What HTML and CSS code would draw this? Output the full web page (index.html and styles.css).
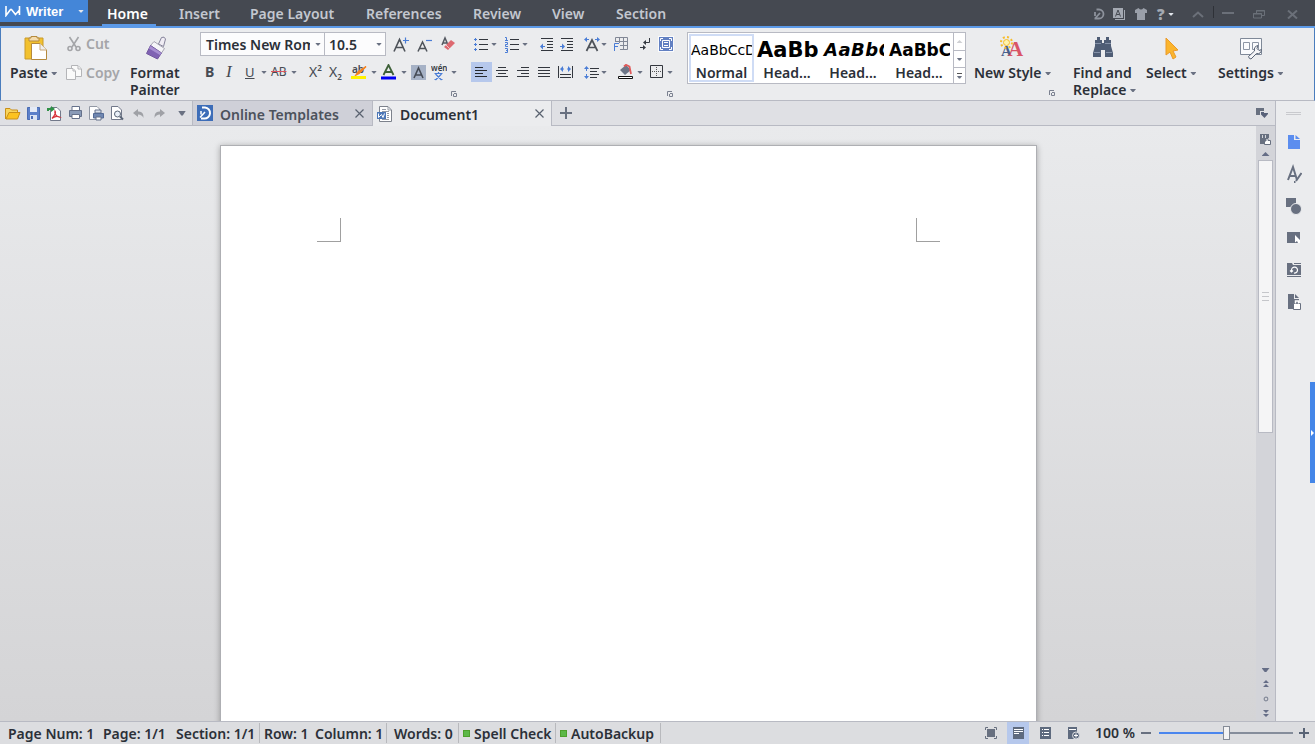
FILE: index.html
```html
<!DOCTYPE html>
<html lang="en">
	<head>
		<meta charset="UTF-8" />
		<meta name="viewport" content="width=device-width, initial-scale=1.0" />
		<title>Document1 - Writer</title>
		<link rel="stylesheet" href="styles.css">
	</head>
	<body>
		<header class="titlebar">
			<button class="app-button">
				<svg width="16" height="11" viewBox="0 0 16 11" fill="none" stroke="#fff" stroke-width="1.6"><path d="M1 0V9.500L5.500 3.500H6.500L10.500 8.500L14.500 4V0M1 3V9M14.500 1V9" /></svg>
				<span>Writer</span>
				<i class="caret light"></i>
			</button>
			<nav class="menu">
				<a class="active">Home</a>
				<a>Insert</a>
				<a>Page Layout</a>
				<a>References</a>
				<a>Review</a>
				<a>View</a>
				<a>Section</a>
			</nav>
			<div class="window-tools">
				<svg width="12" height="12" viewBox="0 0 12 12" fill="none" stroke="#8d929c" stroke-width="1.800"><path d="M3.500 1.500H6A4.500 4.500 0 0 1 6 10.500H1.500M2 10.500L7 5M2 4V8" /></svg>
				<svg width="12" height="12" viewBox="0 0 12 12"><path d="M0 0H10V10H0ZM11 2H12V12H2V11H11Z" fill="#a4a9b2" /><path d="M2.500 8.500L5 2L7.500 8.500M3.500 6.500H6.500" fill="none" stroke="#454951" /></svg>
				<svg width="12" height="12" viewBox="0 0 12 12"><path d="M0 2L3.500 0Q6 3 8.500 0L12 2V5H10V12H2V5H0Z" fill="#9a9fa9" /></svg>
				<b class="help">?</b>
				<i class="caret light"></i>
				<svg width="12" height="7" viewBox="0 0 12 7"><path d="M1 6L6 1.500L11 6" fill="none" stroke="#6b7079" stroke-width="2" /></svg>
				<i class="tool-line"></i>
				<svg width="12" height="12" viewBox="0 0 12 12"><path d="M0 5H12" stroke="#6b7079" stroke-width="2" /></svg>
				<svg width="12" height="9" viewBox="0 0 12 9" fill="none" stroke="#6b7079"><path d="M3.500 3V.5H11.500V5.500H9M3 1H12" /><path d="M.5 3.500H8.500V8H.5ZM0 4H9" /></svg>
				<svg width="11" height="9" viewBox="0 0 11 9"><path d="M1 .5L10 8.500M10 .5L1 8.500" stroke="#6b7079" stroke-width="2" /></svg>
			</div>
		</header>

		<section class="ribbon">
			<!-- Clipboard -->
			<div class="group paste">
				<svg width="24" height="25" viewBox="0 0 24 25"><path d="M1 2H19V23H1Z" fill="#f2c12e" stroke="#c99a2a" /><path d="M5 5V2H7V.5H13V2H15V5Z" fill="#f4dcae" stroke="#b58a3e" /><path d="M7.500 7.500H16L22.500 14V23.500H7.500Z" fill="#fff" stroke="#b58a3e" /><path d="M16 7.500V14H22.500" fill="#eee" stroke="#c9a876" /></svg>
				<span>Paste <i class="caret"></i></span>
			</div>
			<div class="group clip">
				<div class="clip-row">
					<svg width="14" height="16" viewBox="0 0 14 16" fill="none" stroke="#a4a5a8" stroke-width="1.600"><path d="M2.500 1L9 11M11.500 1L5 11" /><circle cx="3" cy="12.500" r="2" /><circle cx="11" cy="12.500" r="2" /></svg>
					<span>Cut</span>
				</div>
				<div class="clip-row">
					<svg width="16" height="16" viewBox="0 0 16 16" fill="#fafafa" stroke="#b4b5b8"><path d="M5.500 .5H12L15.500 4V11.500H5.500Z" /><path d="M.5 3.500H7L9.500 6V14.500H.5Z" /><path d="M12 1V4H15M7 4V6H9" /></svg>
					<span>Copy</span>
				</div>
			</div>
			<div class="group painter">
				<svg width="21" height="24" viewBox="0 0 21 24"><path d="M12.500 8L15.500 1.500Q18.500 0 19.500 3L17.500 10.500Z" fill="#f0edf4" stroke="#85839a" /><path d="M8 5.500L18.500 12.500L15.500 17L4.500 9.500Z" fill="#f5f5f8" stroke="#a6a4b2" /><path d="M4.500 9.500L15.500 17L11.500 23L.5 17.500Z" fill="#7f62b3" stroke="#73589f" /><path d="M4.500 10L15.500 17L14 19L3 12.500Z" fill="#a78fd2" /></svg>
				<span>Format<br>Painter</span>
			</div>

			<!-- Font -->
			<div class="group font-group">
				<div class="font-row-1">
					<div class="combo">
						<span class="combo-name">Times New Roman</span><i class="caret"></i>
						<span class="combo-size">10.5</span><i class="caret"></i>
					</div>
					<svg width="17" height="17" viewBox="0 0 17 17" fill="none"><path d="M1 15.500L6.500 3.500L12 15.500M3 11.500H10" stroke="#4d5259" stroke-width="1.600" /><path d="M10 4.500H16M12.500 1.500V7.500" stroke="#4a7dd6" stroke-width="1.200" /></svg>
					<svg width="16" height="17" viewBox="0 0 16 17" fill="none"><path d="M1 15.500L5.500 6L10 15.500M2.500 12.500H8.500" stroke="#4d5259" stroke-width="1.500" /><path d="M9 4.500H15" stroke="#4a7dd6" stroke-width="1.200" /></svg>
					<svg width="15" height="16" viewBox="0 0 15 16"><path d="M1 9L4 2L7 9M2 7H6" fill="none" stroke="#555a62" stroke-width="1.500" /><path d="M3 11L10 4L14 7L7 14Z" fill="#dd6970" /><path d="M5 9L9 13" stroke="#f3c5c8" /></svg>
				</div>
				<div class="font-row-2">
					<b class="ltr">B</b>
					<em class="ltr serif">I</em>
					<u class="ltr under">U</u>
					<i class="caret"></i>
					<s class="ltr strike">AB</s>
					<i class="caret"></i>
					<span class="ltr script">X<sup>2</sup></span>
					<span class="ltr script">X<sub>2</sub></span>
					<svg width="17" height="16" viewBox="0 0 17 16"><text x="1" y="9" class="tiny">ab</text><path d="M15 2.500L8 9.500L5 11L7 8Z" fill="#f58220" stroke="#f58220" stroke-width="1.500" /><path d="M0 12H15V15H0Z" fill="#fff200" /></svg>
					<i class="caret"></i>
					<svg width="16" height="16" viewBox="0 0 16 16"><path d="M2.500 11L7.500 1L12.500 11M4.500 8H10.500" fill="none" stroke="#3d6038" stroke-width="1.800" /><path d="M0 12.500H15V15.500H0Z" fill="#0000f5" /></svg>
					<i class="caret"></i>
					<svg width="15" height="15" viewBox="0 0 15 15"><path d="M0 0H15V15H0Z" fill="#a6b2c6" /><path d="M3 13L7.500 3L12 13M4.500 10H10.500" fill="none" stroke="#454b55" stroke-width="1.600" /></svg>
					<svg width="16" height="17" viewBox="0 0 16 17"><text x="0" y="7" class="wen">wén</text><path d="M3.500 9.500H11.500M7.500 8V10M4.500 10L10.500 16M10.500 10L4.500 16M3.500 15.500H5.500M9.500 15.500H11.500" fill="none" stroke="#4a7dd6" stroke-width="1.200" /></svg>
					<i class="caret"></i>
				</div>
				<svg class="launcher" width="6" height="6" viewBox="0 0 6 6"><path d="M.5 5V.5H5M2.500 3V5.500H5.500V2.500H3" fill="none" stroke="#7b8190" /></svg>
			</div>

			<!-- Paragraph -->
			<div class="group para-group">
				<div class="para-row-1">
					<svg width="15" height="15" viewBox="0 0 15 15"><path d="M5 2.500H14M5 7.500H14M5 12.500H14" stroke="#33373e" /><path d="M0 2.500H3M1.500 1V4M0 7.500H3M1.500 6V9M0 12.500H3M1.500 11V14" stroke="#4a7dd6" /></svg>
					<i class="caret"></i>
					<svg width="15" height="17" viewBox="0 0 15 17" fill="none"><path d="M5 3.500H14M5 8.500H14M5 13.500H14" stroke="#33373e" /><path d="M0 1.500H1.500V4.500M0 4.500H3M0 6.500H2.500V8.500H.5V10.500H3M0 12.500H2.500V16.500H0M1 14.500H2.500" stroke="#4a7dd6" /></svg>
					<i class="caret"></i>
					<svg width="14" height="13" viewBox="0 0 14 13"><path d="M1 .5H13M7 3.500H13M7 6.500H13M7 9.500H13M1 12.500H13" stroke="#33373e" /><path d="M1 8.500H5" stroke="#4a7dd6" /><path d="M0 8.500L3 5.500V11.500Z" fill="#4a7dd6" /></svg>
					<svg width="14" height="13" viewBox="0 0 14 13"><path d="M1 .5H13M7 3.500H13M7 6.500H13M7 9.500H13M1 12.500H13" stroke="#33373e" /><path d="M0 8.500H4" stroke="#4a7dd6" /><path d="M5 8.500L2 5.500V11.500Z" fill="#4a7dd6" /></svg>
					<svg width="16" height="15" viewBox="0 0 16 15"><path d="M2.500 14L8 3L13.500 14M5 10.500H11" fill="none" stroke="#4d5259" stroke-width="1.700" /><path d="M0 2.500L3 0V5ZM16 2.500L13 0V5Z" fill="#4a7dd6" /><path d="M2 2.500H5M11 2.500H14" stroke="#4a7dd6" /></svg>
					<i class="caret"></i>
					<svg width="15" height="15" viewBox="0 0 15 15"><path d="M1.500 5V.5H13.500V12.500H6M5.500 .5V6M9.500 .5V12M2 4.500H13M6 8.500H13" fill="none" stroke="#818795" /><path d="M.5 14V6.500H5M.5 9.500H4" fill="none" stroke="#4a7dd6" /></svg>
					<svg width="12" height="13" viewBox="0 0 12 13" fill="none"><path d="M9.500 0V4.500H5M0 9.500H5" stroke="#343941" /><path d="M3 4.500L6 2V7ZM6 9.500L3 7V12Z" fill="#343941" /></svg>
					<svg width="16" height="16" viewBox="0 0 16 16"><path d="M0 0H16V16H0Z" fill="#fafbfd" /><path d="M1 1H15V15H1Z" fill="#6280c2" /><path d="M4.500 4.500H11.500V11.500H4.500ZM6 6.500H10M6 9.500H10M2.500 5V2.500H5M11 2.500H13.500V5M2.500 11V13.500H5M11 13.500H13.500V11" fill="none" stroke="#fff" /></svg>
				</div>
				<div class="para-row-2">
					<span class="pressed"><svg width="13" height="11" viewBox="0 0 13 11"><path d="M0 .5H8M0 3.500H12M0 6.500H8M0 9.500H12" stroke="#25282d" /></svg></span>
					<svg width="13" height="11" viewBox="0 0 13 11"><path d="M2 .5H10M0 3.500H12M2 6.500H10M0 9.500H12" stroke="#33373e" /></svg>
					<svg width="13" height="11" viewBox="0 0 13 11"><path d="M4 .5H12M0 3.500H12M4 6.500H12M0 9.500H12" stroke="#33373e" /></svg>
					<svg width="13" height="11" viewBox="0 0 13 11"><path d="M0 .5H12M0 3.500H12M0 6.500H12M0 9.500H12" stroke="#33373e" /></svg>
					<svg width="15" height="12" viewBox="0 0 15 12"><path d="M.5 0V12M14.500 0V12M2 8.500H13M2 11.500H13" stroke="#33373e" /><path d="M2 3L5 0V6ZM13 3L10 0V6Z" fill="#4a7dd6" /><path d="M4 3H6M9 3H11" stroke="#4a7dd6" /></svg>
					<svg width="16" height="13" viewBox="0 0 16 13"><path d="M6 2.500H15M6 5.500H13M6 8.500H15M6 11.500H13" stroke="#33373e" /><path d="M2.500 0L5 3H0ZM2.500 13L5 10H0Z" fill="#4a7dd6" /><path d="M2.500 2V5M2.500 8V11" stroke="#4a7dd6" /></svg>
					<i class="caret"></i>
					<svg width="16" height="16" viewBox="0 0 16 16"><path d="M2 6L8 1L13 6L7 11Z" fill="#6d7687" /><path d="M6 2.500L8 .8L11.500 2.500L13 10" fill="none" stroke="#e05a5a" stroke-width="1.800" /><path d="M.5 12.500H14.500V14.500H.5Z" fill="#fff" stroke="#111" /></svg>
					<i class="caret"></i>
					<svg width="14" height="14" viewBox="0 0 14 14" fill="none"><path d="M.5 .5H12.500V12.500H.5Z" stroke="#33373e" /><path d="M2 6.500H12M6.500 2V12" stroke="#555" stroke-dasharray="1 1" /></svg>
					<i class="caret"></i>
				</div>
				<svg class="launcher" width="6" height="6" viewBox="0 0 6 6"><path d="M.5 5V.5H5M2.500 3V5.500H5.500V2.500H3" fill="none" stroke="#7b8190" /></svg>
			</div>

			<!-- Styles -->
			<div class="gallery">
				<div class="style selected"><p>AaBbCcDd</p><span>Normal</span></div>
				<div class="style h1"><p>AaBb</p><span>Head...</span></div>
				<div class="style h2"><p>AaBbC</p><span>Head...</span></div>
				<div class="style h3"><p>AaBbC</p><span>Head...</span></div>
				<div class="gallery-nav">
					<span><i class="caret up"></i></span>
					<span><i class="caret"></i></span>
					<span class="more"><i class="caret"></i></span>
				</div>
			</div>
			<div class="group new-style">
				<svg width="24" height="24" viewBox="0 0 24 24"><text x="1" y="20" class="glyph-a blue">A</text><text x="8" y="20" class="glyph-a red">A</text><circle cx="6.500" cy="6.500" r="3" fill="#fff3ad" stroke="#f7bd2c" /><circle cx="6.500" cy="6.500" r="5.500" fill="none" stroke="#f7bd2c" stroke-width="2" stroke-dasharray="2 2.300" /></svg>
				<span>New Style <i class="caret"></i></span>
				<svg class="launcher" width="6" height="6" viewBox="0 0 6 6"><path d="M.5 5V.5H5M2.500 3V5.500H5.500V2.500H3" fill="none" stroke="#7b8190" /></svg>
			</div>
			<div class="group find">
				<svg width="22" height="21" viewBox="0 0 22 21"><path d="M5 0H8V3H10V6H12V3H14V0H17V3H19V9L21 16V20H13V13H9V20H1V16L3 9V3H5Z" fill="#4f5d75" /><path d="M3 6.500H9M13 6.500H19M2 15.500H8M14 15.500H20" stroke="#8491a8" /></svg>
				<span>Find and<br>Replace <i class="caret"></i></span>
			</div>
			<div class="group select">
				<svg width="16" height="23" viewBox="0 0 16 23"><path d="M2 1L14 13L9 14L12 20L9 22L6 15L2 18Z" fill="#fbb52d" stroke="#ea9a2a" /></svg>
				<span>Select <i class="caret"></i></span>
			</div>
			<div class="group settings">
				<svg width="24" height="23" viewBox="0 0 24 23" fill="none"><path d="M1.500 1.500H22.500V17.500H1.500Z" fill="#fafbfd" stroke="#7f8998" /><path d="M4.500 5.500H10.500V12.500H4.500ZM13.500 5.500H19.500V12.500H13.500Z" stroke="#8d96a5" /><path d="M9.500 19.500L15.500 14Q14.500 9.500 19 8.500L18 11.500L20 13.500L22.500 12.500Q22 17.500 17.500 16.500L12 22Q10 22 9.500 19.500Z" fill="#f5f5f7" stroke="#596476" /></svg>
				<span>Settings <i class="caret"></i></span>
			</div>
		</section>

		<div class="workspace">
			<div class="left">
				<div class="tabstrip">
					<div class="quick">
						<svg width="16" height="13" viewBox="0 0 16 13"><path d="M.5 12V1.500H5L6.500 3H12.500V5" fill="#f8d45c" stroke="#c98f18" /><path d="M1 12L4 5.500H15L12.500 12Z" fill="#fcc21f" stroke="#c98f18" /></svg>
						<svg width="14" height="13" viewBox="0 0 14 13"><path d="M.5 .5H12.500V12.500H.5Z" fill="#5b7fc9" stroke="#4a6cb4" /><path d="M3 0H10V5H3Z" fill="#e4eaf6" /><path d="M3 8H10V13H3Z" fill="#dbe3f2" /><path d="M4 9H6V12H4Z" fill="#4a6cb4" /></svg>
						<svg width="15" height="15" viewBox="0 0 15 15"><path d="M3.500 1.500H10L13.500 5V14.500H3.500Z" fill="#fff" stroke="#72798a" /><path d="M5 12.500C8 9 9 6 8 5C7 8 10 11 12.500 11C9 9 7 11 5 12.500Z" fill="none" stroke="#d8343c" stroke-width="1.300" /><path d="M0 2H4V0L8 3L4 6V4H2V5H0Z" fill="#2f9147" /></svg>
						<svg width="14" height="14" viewBox="0 0 14 14"><path d="M3 .5H10.500V5H3Z" fill="#fff" stroke="#65718a" /><path d="M.5 4.500H12.500V10.500H.5Z" fill="#8a9bb8" stroke="#65718a" /><path d="M3 8.500H10.500V12.500H3Z" fill="#fff" stroke="#65718a" /></svg>
						<svg width="16" height="15" viewBox="0 0 16 15"><path d="M.5 .5H8L10.500 3V13.500H.5Z" fill="#fff" stroke="#9298a4" /><path d="M6 4H12V7H6Z" fill="#dce3ee" stroke="#65718a" /><path d="M4.500 7.500H14.500V12H4.500Z" fill="#7087b1" stroke="#546b96" /><path d="M7 11H12V14H7Z" fill="#fff" stroke="#65718a" /></svg>
						<svg width="13" height="15" viewBox="0 0 13 15"><path d="M.5 .5H7L10.500 4V13.500H.5Z" fill="#fff" stroke="#72798a" /><circle cx="6.500" cy="8" r="3" fill="#eaf0f8" stroke="#596476" /><path d="M9 10.500L12 13.500" stroke="#596476" stroke-width="2" /></svg>
						<svg width="12" height="9" viewBox="0 0 12 9"><path d="M0 4L5 0V2.500Q11 2 10.500 9Q9 5.500 5 5.500V8Z" fill="#9fa1a6" /></svg>
						<svg width="12" height="9" viewBox="0 0 12 9"><path d="M11 4L6 0V2.500Q0 2 .5 9Q2 5.500 6 5.500V8Z" fill="#9fa1a6" /></svg>
						<i class="caret big"></i>
					</div>
					<div class="tab">
						<svg width="16" height="16" viewBox="0 0 16 16"><path d="M0 0H16V16H0Z" fill="#3d6db8" /><path d="M5 2.500H8A5.500 5.500 0 0 1 7 13.500H4" fill="none" stroke="#fff" stroke-width="2" /><path d="M3 12.500L8 7M4 6V9.500" stroke="#fff" stroke-width="1.500" /></svg>
						<span>Online Templates</span>
						<svg width="9" height="9" viewBox="0 0 9 9"><path d="M.5 .5L8.500 8.500M8.500 .5L.5 8.500" stroke="#59616f" stroke-width="1.200" /></svg>
					</div>
					<div class="tab current">
						<svg width="16" height="16" viewBox="0 0 16 16"><path d="M2.500 .5H11L14.500 4V15.500H2.500Z" fill="#fff" stroke="#7d828c" /><path d="M5 3.500H9M5 5.500H12M10 7.500H12M10 9.500H12M10 11.500H12M5 13.500H12M11 1V4H14" stroke="#969ba5" fill="none" /><path d="M0 6H9V13H0Z" fill="#4e78b8" /><path d="M1.500 7.500V11.500L4.500 8.500L6 11.500L7.500 7.500" stroke="#fff" fill="none" /></svg>
						<span>Document1</span>
						<svg width="9" height="9" viewBox="0 0 9 9"><path d="M.5 .5L8.500 8.500M8.500 .5L.5 8.500" stroke="#59616f" stroke-width="1.200" /></svg>
					</div>
					<svg class="add" width="12" height="12" viewBox="0 0 12 12"><path d="M6 0V12M0 6H12" stroke="#687080" stroke-width="2" /></svg>
					<svg class="tab-list" width="13" height="11" viewBox="0 0 13 11"><path d="M0 0H8V3H4V7H0Z" fill="#687080" /><path d="M5 4H8V5H12V6L8.500 10L5 6.500Z" fill="#59627a" /></svg>
				</div>
				<div class="doc-row">
					<main class="canvas">
						<div class="page">
							<i class="crop"></i>
							<i class="crop right"></i>
						</div>
					</main>
					<div class="scrollbar">
						<svg width="11" height="11" viewBox="0 0 11 11"><path d="M0 0H9V4H6V10H0Z" fill="#687080" /><path d="M2.500 1V4M5.500 1V4" stroke="#d3d4d9" /><path d="M4.500 10.500V7H6V4.500H8V6.500H10.500V10.500Z" fill="#fff" stroke="#687080" /></svg>
						<i class="caret up blue"></i>
						<div class="thumb"><i></i><i></i><i></i></div>
						<div class="scroll-end">
							<i class="caret down blue"></i>
							<svg width="6" height="8" viewBox="0 0 6 8"><path d="M3 0L6 3H0ZM3 4L6 7H0Z" fill="#656d86" /></svg>
							<svg width="6" height="6" viewBox="0 0 6 6"><circle cx="3" cy="3" r="1.800" fill="none" stroke="#858b9a" stroke-width="1.200" /></svg>
							<svg width="6" height="8" viewBox="0 0 6 8"><path d="M3 3L6 0H0ZM3 7L6 4H0Z" fill="#656d86" /></svg>
						</div>
					</div>
				</div>
			</div>
			<aside class="sidebar">
				<i class="grip"></i>
				<svg width="16" height="32" viewBox="0 -9 16 32"><path d="M2 0H8V5H14V14H2Z" fill="#5b8def" /><path d="M9.500 0L14 4H9.500Z" fill="#5b8def" /></svg>
				<svg width="16" height="32" viewBox="0 -9 16 32"><path d="M2 13L7 0L11 13M3.500 9H10" fill="none" stroke="#687080" stroke-width="2" /><path d="M15.500 6L10 14M8 15H9.500" stroke="#687080" stroke-width="2" /></svg>
				<svg width="16" height="32" viewBox="0 -8 16 32"><path d="M0 0H10V9H0Z" fill="#687080" /><circle cx="10" cy="11" r="5.500" fill="#687080" stroke="#ebecee" /></svg>
				<svg width="16" height="32" viewBox="0 -8 16 32"><path d="M1 2H14V13H1Z" fill="#687080" /><path d="M9 5V12.500L11 11L12 13H14V10Z" fill="#fff" /></svg>
				<svg width="16" height="32" viewBox="0 -8 16 32"><path d="M1 1H6L7 3H15V13H1ZM1 14H15V15H1ZM8 1H15V2H8Z" fill="#687080" /><path d="M5.500 10V8A3 3 0 1 1 8 11M4 8.500L5.500 10L7 8.500" fill="none" stroke="#fff" stroke-width="1.200" /></svg>
				<svg width="16" height="32" viewBox="0 -8 16 32"><path d="M2 0H8V5H13V15H2ZM9 0L13 4H9Z" fill="#687080" /><path d="M7.500 9.500H14.500V15.500H7.500Z" fill="#fff" stroke="#687080" /><path d="M9.500 9.500V7H12.500V9.500" fill="none" stroke="#fff" stroke-width="1.500" /></svg>
				<div class="drawer"></div>
			</aside>
		</div>

		<footer class="status">
			<div class="counts">
				<span>Page Num: 1</span>
				<span>Page: 1/1</span>
				<span>Section: 1/1</span>
				<span class="sep">Row: 1</span>
				<span>Column: 1</span>
				<span class="sep words">Words: 0</span>
				<span class="sep"><i class="led"></i>Spell Check</span>
				<span class="sep"><i class="led"></i>AutoBackup</span>
				<span class="sep"></span>
			</div>
			<div class="views">
				<svg width="13" height="13" viewBox="0 0 13 13"><path d="M2 2H10V10H2Z" fill="#687080" /><path d="M.5 3V.5H3M9 .5H11.500V3M.5 9V11.500H3M9 11.500H11.500V9" fill="none" stroke="#687080" /></svg>
				<span class="pressed"><svg width="11" height="12" viewBox="0 0 11 12"><path d="M0 0H11V12H0Z" fill="#5e6a7e" /><path d="M1 2.500H10M1 4.500H10M1 6.500H6" stroke="#fff" /></svg></span>
				<svg width="11" height="12" viewBox="0 0 11 12"><path d="M0 0H11V12H0Z" fill="#5e6a7e" /><path d="M2 2.500H3M4 2.500H9M2 5.500H3M4 5.500H9M2 8.500H3M4 8.500H9" stroke="#fff" /></svg>
				<svg width="12" height="12" viewBox="0 0 12 12"><path d="M0 0H9V12H0Z" fill="#5e6a7e" /><path d="M1 2.500H8" stroke="#fff" /><circle cx="8" cy="8.500" r="3.500" fill="#5e6a7e" stroke="#dcdde0" /><path d="M6 8.500H10M8 6.500V10.500" stroke="#fff" /></svg>
			</div>
			<span class="zoom-value">100 %</span>
			<svg width="10" height="2" viewBox="0 0 10 2"><path d="M0 0H10V2H0Z" fill="#687080" /></svg>
			<div class="slider"><i class="done"></i><i class="knob"></i><i class="rest"></i></div>
			<svg width="10" height="10" viewBox="0 0 10 10"><path d="M0 5H10M5 0V10" stroke="#596476" stroke-width="2" /></svg>
		</footer>
	</body>
</html>
```
FILE: styles.css
```css
* {
	box-sizing: border-box;
}

body {
	margin: 0;
	height: 744px;
	overflow: hidden;
	display: flex;
	flex-direction: column;
	font-family: "Noto Sans", "Open Sans", sans-serif;
	font-size: 14px;
	font-weight: 600;
	line-height: 17px;
	color: #2b3038;
	background: #ebecee;
}

svg {
	display: block;
	flex: none;
}

span {
	white-space: nowrap;
}

.caret {
	display: inline-block;
	flex: none;
	width: 6px;
	height: 3px;
	background: #6a7182;
	clip-path: polygon(0 0, 100% 0, 60% 100%, 40% 100%);
	vertical-align: 3px;
}

.caret.up {
	clip-path: polygon(50% 0, 100% 100%, 0 100%);
	background: #d0d1d4;
}

.caret.light {
	background: #e2e6ec;
}

.caret.big {
	width: 8px;
	height: 5px;
}

.caret.blue {
	width: 8px;
	height: 4px;
	background: #656d86;
}

/* title bar */
.titlebar {
	height: 28px;
	flex: none;
	display: flex;
	background: #454951;
	border-bottom: 2px solid #5c9ae8;
}

.app-button {
	width: 88px;
	height: 22px;
	padding: 0 4px 0 5px;
	display: flex;
	align-items: center;
	border: 0;
	background: #4486d8;
	color: #fff;
	font: bold 13px "Liberation Sans", sans-serif;
}

.app-button span {
	margin-left: 5px;
	flex: 1;
	text-align: left;
}

.menu {
	margin-left: 14px;
	display: grid;
	grid-template-columns: 72px 71px 116px 107px 79px 64px 70px;
	color: #c3c7cf;
}

.menu a {
	height: 26px;
	padding: 5px 0 0 5px;
	white-space: nowrap;
}

.menu .active {
	width: 54px;
	color: #fff;
	border-bottom: 2px solid #5c9ae8;
}

.window-tools {
	margin-left: auto;
	height: 26px;
	display: grid;
	grid-template-columns: 20px 22px 22px 11px 24px 21px 9px 31px 34px 28px;
	align-items: center;
	padding-top: 2px;
}

.window-tools .help {
	color: #a4a9b2;
	font-size: 15px;
}

.tool-line {
	width: 1px;
	height: 12px;
	margin-top: -4px;
	background: #2e3137;
}

/* ribbon */
.ribbon {
	height: 73px;
	flex: none;
	display: flex;
	background: #ebecee;
	border: solid #4a7dbd;
	border-width: 0 1px;
	border-bottom: 1px solid #b8bac3;
}

.group {
	flex: none;
	display: flex;
	flex-direction: column;
}

.paste {
	width: 57px;
	padding: 8px 0 0 9px;
}

.paste svg {
	margin: 0 0 3px 14px;
}

.clip {
	width: 72px;
	padding: 7px 0 0 9px;
	gap: 11px;
	color: #a4a5a8;
}

.clip-row {
	display: grid;
	grid-template-columns: 19px 40px;
	height: 18px;
	align-items: center;
}

.clip-row span {
	margin-top: -1px;
}

.clip-row + .clip-row svg {
	margin-left: -1px;
}

.painter {
	width: 70px;
}

.painter svg {
	margin: 8px 0 4px 16px;
}

.font-group {
	width: 271px;
	padding-top: 4px;
}

.font-row-1 {
	height: 24px;
	display: grid;
	grid-template-columns: 193px 24px 24px 20px;
	align-items: center;
}

.combo {
	width: 186px;
	height: 24px;
	border: 1px solid #b8bac3;
	background: #fcfcfd;
	display: grid;
	grid-template-columns: 114px 9px 52px 8px;
	align-items: center;
}

.combo-name {
	padding-left: 5px;
	width: 109px;
	overflow: hidden;
}

.combo-size {
	border-left: 1px solid #b8bac3;
	height: 22px;
	line-height: 23px;
	padding-left: 4px;
}

.font-row-2 {
	height: 32px;
	padding-left: 5px;
	display: grid;
	grid-template-columns: 21px 19px 16px 10px 20px 16px 20px 24px 20px 10px 20px 10px 20px 20px 8px;
	align-items: center;
}

.ltr {
	font: 14px/16px "Noto Sans", sans-serif;
	color: #464b53;
}

b.ltr {
	font-weight: bold;
}

.ltr.serif {
	font-family: "Liberation Serif", serif;
	font-size: 17px;
	font-style: italic;
}

.ltr.under {
	font-size: 13px;
}

.ltr.strike {
	font-size: 12px;
	text-decoration: line-through #dd5560;
}

.ltr.script {
	margin-left: 2px;
}

.ltr sup,
.ltr sub {
	font-size: 8px;
	font-weight: 600;
	line-height: 0;
}

.ltr sup {
	vertical-align: 6px;
}

.ltr sub {
	vertical-align: -3px;
}

.tiny {
	font: 600 10px "Noto Sans", sans-serif;
	fill: #464b53;
}

.wen {
	font: 600 8px "Noto Sans", sans-serif;
	fill: #343941;
}

.launcher {
	margin: 3px 0 0 251px;
}

.para-group {
	width: 216px;
	padding-top: 4px;
}

.para-row-1 {
	height: 24px;
	padding-left: 3px;
	display: grid;
	grid-template-columns: 17px 14px 17px 18px 20px 24px 17px 13px 26px 18px 17px;
	align-items: center;
}

.para-row-2 {
	height: 32px;
	display: grid;
	grid-template-columns: 25px 21px 21px 20px 26px 17px 17px 19px 13px 17px 8px;
	align-items: center;
}

.pressed {
	background: #b6c8ec;
}

.para-row-2 .pressed {
	width: 21px;
	height: 20px;
	padding: 5px 4px;
}

.para-group .launcher {
	margin-left: 196px;
}

.gallery {
	width: 279px;
	height: 52px;
	margin-top: 4px;
	flex: none;
	display: flex;
	border: 1px solid #b8bac3;
	background: #fff;
}

.style {
	width: 66px;
	height: 48px;
	margin-top: 1px;
	padding: 2px;
	text-align: center;
	overflow: hidden;
}

.style.selected {
	width: 65px;
	margin-left: 1px;
	border: 2px solid #cfdcf5;
	padding: 0;
}

.style p {
	margin: 0;
	height: 28px;
	line-height: 28px;
	text-align: left;
	overflow: hidden;
	white-space: nowrap;
	color: #000;
	font-family: "DejaVu Sans", sans-serif;
	font-size: 14px;
	font-weight: normal;
}

.style.h1 p,
.style.h2 p,
.style.h3 p {
	padding-left: 1px;
	font-weight: bold;
	font-size: 17px;
}

.style.h1 p {
	font-size: 21px;
}

.style.h2 p {
	padding-left: 2px;
	font-size: 18px;
	font-style: italic;
	letter-spacing: 0.5px;
}

.gallery-nav {
	width: 12px;
	margin-left: auto;
	display: grid;
	grid-template-rows: 17px 17px 16px;
	border-left: 1px solid #b8bac3;
}

.gallery-nav span {
	display: flex;
	flex-direction: column;
	align-items: center;
	justify-content: center;
}

.gallery-nav span + span {
	border-top: 1px solid #b8bac3;
}

.gallery-nav .more::before {
	content: "";
	width: 5px;
	height: 1px;
	margin-bottom: 2px;
	background: #555;
}

.new-style {
	width: 100px;
	padding: 8px 0 0 8px;
}

.new-style > svg:first-child {
	margin: 0 0 4px 26px;
}

.new-style .launcher {
	margin: 9px 0 0 75px;
}

.glyph-a {
	font: bold 17px "Liberation Serif", serif;
}

.glyph-a.blue {
	fill: #485f8c;
	font-size: 15px;
}

.glyph-a.red {
	fill: #d95567;
	font-size: 21px;
}

.find {
	width: 73px;
	padding: 9px 0 0 7px;
}

.find svg {
	margin: 0 0 6px 19px;
}

.select {
	width: 72px;
	padding: 9px 0 0 7px;
}

.select svg {
	margin: 0 0 4px 18px;
}

.settings {
	padding: 8px 0 0 7px;
}

.settings svg {
	margin: 1px 0 4px 21px;
}

/* workspace */
.workspace {
	height: 620px;
	flex: none;
	display: flex;
}

.left {
	width: 1275px;
}

.tabstrip {
	height: 25px;
	display: flex;
	align-items: center;
	background: #dfe0e4;
	border-bottom: 1px solid #b8bac3;
}

.quick {
	width: 192px;
	padding-left: 5px;
	display: grid;
	grid-template-columns: 22px 20px 22px 20px 22px 22px 21px 24px 8px;
	align-items: center;
}

.tab {
	width: 181px;
	height: 25px;
	padding: 1px 8px 0 4px;
	display: flex;
	align-items: center;
	border: solid #b8bac3;
	border-width: 0 1px 1px;
	background: #cfd0d8;
	color: #4c525c;
}

.tab span {
	margin: 2px 0 0 7px;
	flex: 1;
}

.tab.current {
	width: 179px;
	padding-right: 7px;
	border-width: 0 1px 0 0;
	background: #ebecee;
	color: #2b3038;
}

.add {
	margin-left: 8px;
}

.tab-list {
	margin: 0 6px 0 auto;
}

.doc-row {
	height: 595px;
	display: flex;
}

.canvas {
	width: 1256px;
	padding: 19px 219px 0 220px;
	overflow: hidden;
	background: linear-gradient(#e9eaec, #d4d4d6);
}

.page {
	height: 590px;
	padding: 72px 96px;
	display: flex;
	justify-content: space-between;
	background: #fff;
	border: 1px solid #aeafb3;
	box-shadow: 0 1px 6px rgba(0, 0, 0, 0.3);
}

.crop {
	width: 24px;
	height: 24px;
	border: solid #a0a0a0;
	border-width: 0 1px 1px 0;
}

.crop.right {
	border-width: 0 0 1px 1px;
}

.scrollbar {
	width: 19px;
	display: flex;
	flex-direction: column;
	align-items: center;
	padding-top: 8px;
	background: #d3d4d9;
}

.scrollbar > .caret {
	margin: 7px 0 4px;
}

.thumb {
	width: 15px;
	height: 273px;
	display: flex;
	flex-direction: column;
	align-items: center;
	justify-content: center;
	gap: 3px;
	border: 1px solid #b8bac3;
	background: #f5f5f6;
}

.thumb i {
	width: 7px;
	height: 1px;
	background: #c5c6ca;
}

.scroll-end {
	margin-top: auto;
	padding-bottom: 3px;
	display: flex;
	flex-direction: column;
	align-items: center;
	gap: 8px;
}

.sidebar {
	position: relative;
	width: 40px;
	border-left: 1px solid #b8bac3;
	padding: 11px 0 0 10px;
	background: #ebecee;
}

.grip {
	display: block;
	width: 15px;
	height: 3px;
	margin-bottom: 11px;
	border: solid #c9cace;
	border-width: 1px 0;
}

.drawer {
	position: absolute;
	right: 0;
	top: 281px;
	width: 5px;
	height: 101px;
	background: #4486e8;
}

.drawer::after {
	content: "";
	position: absolute;
	left: 1px;
	top: 48px;
	border: solid transparent;
	border-width: 3px 0 3px 3px;
	border-left-color: #fff;
}

/* status bar */
.status {
	height: 23px;
	flex: none;
	display: flex;
	align-items: center;
	border-top: 1px solid #b8bac3;
	background: #dcdde0;
}

.counts {
	width: 985px;
	padding-left: 8px;
	display: grid;
	grid-template-columns: 95px 73px 83px 56px 71px 72px 97px 105px 1px;
}

.counts span {
	height: 20px;
	line-height: 22px;
}

.counts .sep {
	border-left: 1px solid #b8b9bd;
	padding-left: 4px;
}

.counts .words {
	padding-left: 7px;
}

.led {
	display: inline-block;
	width: 7px;
	height: 7px;
	margin-right: 4px;
	vertical-align: 2px;
	border: 1px solid #4da02c;
	background: #5cb848;
}

.views {
	width: 110px;
	display: grid;
	grid-template-columns: 22px 33px 28px 20px;
	align-items: center;
}

.views .pressed {
	width: 22px;
	height: 22px;
	padding: 5px 6px;
}

.zoom-value {
	width: 46px;
	margin-top: -2px;
}

.slider {
	width: 134px;
	margin: 0 6px 0 8px;
	display: flex;
	align-items: center;
}

.slider .done {
	width: 64px;
	height: 2px;
	background: #4a86ee;
}

.slider .knob {
	width: 7px;
	height: 14px;
	border: 1px solid #858b96;
	background: #f3f3f4;
}

.slider .rest {
	flex: 1;
	height: 2px;
	background: #858d9b;
}
```
